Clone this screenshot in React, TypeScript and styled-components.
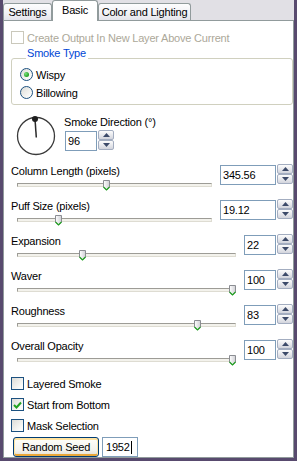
import React from 'react';
import styled, { createGlobalStyle } from 'styled-components';

const GlobalStyle = createGlobalStyle`
  * {
    margin: 0;
    padding: 0;
    box-sizing: border-box;
  }

  html, body {
    width: 297px;
    height: 461px;
    overflow: hidden;
  }

  body {
    background: #584a6e;
    font-family: 'Liberation Sans', Arial, sans-serif;
    font-size: 11px;
    letter-spacing: -0.2px;
    color: #000;
  }
`;

const Window = styled.div`
  width: 297px;
  height: 461px;
  padding: 0 3px 3px 3px;
  display: flex;
  flex-direction: column;
  background: #584a6e;
`;

const TabStrip = styled.div`
  height: 20px;
  flex: none;
  display: flex;
  align-items: flex-end;
  background: #e1e0e5;
`;

const Tab = styled.div<{ $active?: boolean; $w: number }>`
  width: ${p => p.$w}px;
  height: ${p => (p.$active ? 21 : 17)}px;
  margin-bottom: ${p => (p.$active ? -1 : 0)}px;
  padding-bottom: ${p => (p.$active ? 2 : 0)}px;
  display: flex;
  align-items: center;
  justify-content: center;
  border: 1px solid #919b9c;
  border-bottom: none;
  border-radius: 3px 3px 0 0;
  background: ${p => (p.$active ? '#fff' : 'linear-gradient(#fdfdfe, #f1f1f5 60%, #e4e4eb)')};
  position: relative;
  z-index: ${p => (p.$active ? 2 : 1)};
`;

const Panel = styled.div`
  flex: 1;
  display: flex;
  flex-direction: column;
  background: #fff;
  border: 1px solid #919b9c;
  padding: 0 0 0 7px;
`;

const CheckRow = styled.label<{ $disabled?: boolean }>`
  display: flex;
  align-items: center;
  gap: 3px;
  height: 13px;
  color: ${p => (p.$disabled ? '#aca899' : '#000')};
`;

const Box = styled.span<{ $disabled?: boolean }>`
  width: 13px;
  height: 13px;
  flex: none;
  display: flex;
  align-items: center;
  justify-content: center;
  border: 1px solid ${p => (p.$disabled ? '#cac8bb' : '#1c5180')};
  background: ${p => (p.$disabled ? '#fff' : 'linear-gradient(135deg, #dcdcd7, #fbfbf9 80%)')};
`;

const TopCheck = styled(CheckRow)`
  margin-top: 10px;
`;

const Group = styled.fieldset`
  margin: 4px 0 0 0;
  border: 1px solid #d0d0bf;
  border-radius: 3px;
  padding: 0 8px 5px 8px;
  display: flex;
  flex-direction: column;
  gap: 5px;
`;

const GroupTitle = styled.legend`
  color: #0046d5;
  line-height: 11px;
  padding: 0 2px 9px 1px;
  margin-left: 6px;
`;

const RadioRow = styled.label`
  display: flex;
  align-items: center;
  gap: 3px;
  height: 13px;
`;

const RadioCircle = styled.span`
  width: 13px;
  height: 13px;
  flex: none;
  border-radius: 50%;
  border: 1px solid #1c5180;
  background: linear-gradient(135deg, #dcdcd7, #fbfbf9 80%);
  display: flex;
  align-items: center;
  justify-content: center;
`;

const RadioDot = styled.span`
  width: 5px;
  height: 5px;
  border-radius: 50%;
  background: radial-gradient(circle at 35% 35%, #7ce07c, #21a121 70%);
`;

const DialRow = styled.div`
  display: flex;
  margin-top: 10px;
`;

const Dial = styled.svg`
  flex: none;
  margin-left: 5px;
`;

const DialSide = styled.div`
  margin: 1px 0 0 8px;
  display: flex;
  flex-direction: column;
  gap: 2px;
`;

const Label = styled.div`
  line-height: 13px;
  white-space: nowrap;
`;

const Sliders = styled.div`
  margin-top: 8px;
  display: flex;
  flex-direction: column;
`;

const SliderRow = styled.div`
  height: 35px;
  display: flex;
  align-items: flex-start;
`;

const SliderSide = styled.div`
  flex: 1;
  display: flex;
  flex-direction: column;
`;

const TrackBox = styled.div`
  position: relative;
  height: 14px;
  margin: 0 8px 0 6px;
  display: flex;
  align-items: center;
`;

const Track = styled.div`
  flex: 1;
  height: 4px;
  background: #f3f2ec;
  border-top: 1px solid #9d9c96;
  border-left: 1px solid #9d9c96;
  border-bottom: 1px solid #dedcd2;
  border-right: 1px solid #dedcd2;
`;

const Thumb = styled.svg`
  position: absolute;
  top: 2px;
`;

const SpinWrap = styled.div<{ $indent?: number }>`
  flex: none;
  display: flex;
  gap: 1px;
  margin-left: ${p => p.$indent || 0}px;
`;

const SpinText = styled.div<{ $w: number }>`
  width: ${p => p.$w}px;
  height: 20px;
  border: 1px solid #7f9db9;
  background: #fff;
  padding-left: 2px;
  display: flex;
  align-items: center;
`;

const SpinButtons = styled.div`
  width: 16px;
  height: 20px;
  margin-top: -1px;
  display: flex;
  flex-direction: column;
`;

const SpinButton = styled.div`
  flex: 1;
  display: flex;
  align-items: center;
  justify-content: center;
  border: 1px solid #a3adc0;
  border-radius: 2px;
  background: linear-gradient(#fcfcfc, #e4e5ea 60%, #d2d4dc);
`;

const Checks = styled.div`
  margin-top: 2px;
  display: flex;
  flex-direction: column;
  gap: 8px;
`;

const SeedRow = styled.div`
  margin: 5px 0 0 2px;
  display: flex;
  align-items: center;
  gap: 3px;
`;

const Button = styled.button`
  width: 86px;
  height: 20px;
  font: inherit;
  letter-spacing: inherit;
  color: #000;
  border: 1px solid #003c74;
  border-radius: 3px;
  background: linear-gradient(#fffffb, #f3f2ec 70%, #e0dccf);
  box-shadow: inset 0 1px 0 1px #ffe3a0, inset 0 -1px 0 1px #eaa738;
`;

const SeedBox = styled.div`
  width: 36px;
  height: 20px;
  border: 1px solid #7f9db9;
  padding-left: 3px;
  display: flex;
  align-items: center;
`;

const Caret = styled.span`
  width: 1px;
  height: 13px;
  background: #000;
  margin-left: 1px;
`;

const Arrow = ({ up }: { up?: boolean }) => (
  <svg width="7" height="4" viewBox="0 0 7 4">
    <polygon points={up ? '0,4 3.5,0 7,4' : '0,0 3.5,4 7,0'} fill="#3c4a69" />
  </svg>
);

const Check = () => (
  <svg width="9" height="8" viewBox="0 0 9 8">
    <polyline points="1,4 3.5,6.5 8,1.5" fill="none" stroke="#21a121" strokeWidth="2" />
  </svg>
);

function Spin({ value, w, indent }: { value: string; w: number; indent?: number }) {
  return (
    <SpinWrap $indent={indent}>
      <SpinText $w={w}>{value}</SpinText>
      <SpinButtons>
        <SpinButton><Arrow up /></SpinButton>
        <SpinButton><Arrow /></SpinButton>
      </SpinButtons>
    </SpinWrap>
  );
}

function Checkbox({ label, checked, disabled }: { label: string; checked?: boolean; disabled?: boolean }) {
  return (
    <CheckRow $disabled={disabled}>
      <Box $disabled={disabled}>{checked && <Check />}</Box>
      {label}
    </CheckRow>
  );
}

const sliders = [
  { label: 'Column Length (pixels)', value: '345.56', w: 56, pos: 0.4615 },
  { label: 'Puff Size (pixels)', value: '19.12', w: 56, pos: 0.215 },
  { label: 'Expansion', value: '22', w: 32, pos: 0.301 },
  { label: 'Waver', value: '100', w: 32, pos: 0.986 },
  { label: 'Roughness', value: '83', w: 32, pos: 0.822 },
  { label: 'Overall Opacity', value: '100', w: 32, pos: 0.986 },
];

export default function App() {
  return (
    <>
      <GlobalStyle />
      <Window>
        <TabStrip>
          <Tab $w={49}>Settings</Tab>
          <Tab $w={46} $active>Basic</Tab>
          <Tab $w={93}>Color and Lighting</Tab>
        </TabStrip>
        <Panel>
          <TopCheck $disabled>
            <Box $disabled />
            Create Output In New Layer Above Current
          </TopCheck>

          <Group>
            <GroupTitle>Smoke Type</GroupTitle>
            <RadioRow>
              <RadioCircle><RadioDot /></RadioCircle>
              Wispy
            </RadioRow>
            <RadioRow>
              <RadioCircle />
              Billowing
            </RadioRow>
          </Group>

          <DialRow>
            <Dial width="40" height="42" viewBox="0 0 40 42">
              <circle cx="20" cy="21" r="18.5" fill="none" stroke="#3a3a3a" strokeWidth="1.3" />
              <line x1="19" y1="4" x2="20.3" y2="22.5" stroke="#2a2a2a" strokeWidth="1.5" />
              <circle cx="19" cy="4" r="3" fill="#1e1e1e" />
            </Dial>
            <DialSide>
              <Label>Smoke Direction (°)</Label>
              <Spin value="96" w={32} indent={1} />
            </DialSide>
          </DialRow>

          <Sliders>
            {sliders.map(s => (
              <SliderRow key={s.label}>
                <SliderSide>
                  <Label>{s.label}</Label>
                  <TrackBox>
                    <Track />
                    <Thumb
                      width="7"
                      height="11"
                      viewBox="0 0 7 11"
                      style={{ left: `calc(${s.pos * 100}% - 3.5px)` }}
                    >
                      <defs>
                        <linearGradient id="thumbFill" x1="0" y1="0" x2="1" y2="0">
                          <stop offset="0" stopColor="#ffffff" />
                          <stop offset="1" stopColor="#cfcfd4" />
                        </linearGradient>
                      </defs>
                      <path d="M0.5 0.5H6.5V7L3.5 10L0.5 7Z" fill="url(#thumbFill)" stroke="#8b8d92" />
                      <polyline points="0.5,7 3.5,10 6.5,7" fill="none" stroke="#21a121" strokeWidth="1.2" />
                    </Thumb>
                  </TrackBox>
                </SliderSide>
                <Spin value={s.value} w={s.w} />
              </SliderRow>
            ))}
          </Sliders>

          <Checks>
            <Checkbox label="Layered Smoke" />
            <Checkbox label="Start from Bottom" checked />
            <Checkbox label="Mask Selection" />
          </Checks>

          <SeedRow>
            <Button>Random Seed</Button>
            <SeedBox>
              1952
              <Caret />
            </SeedBox>
          </SeedRow>
        </Panel>
      </Window>
    </>
  );
}
